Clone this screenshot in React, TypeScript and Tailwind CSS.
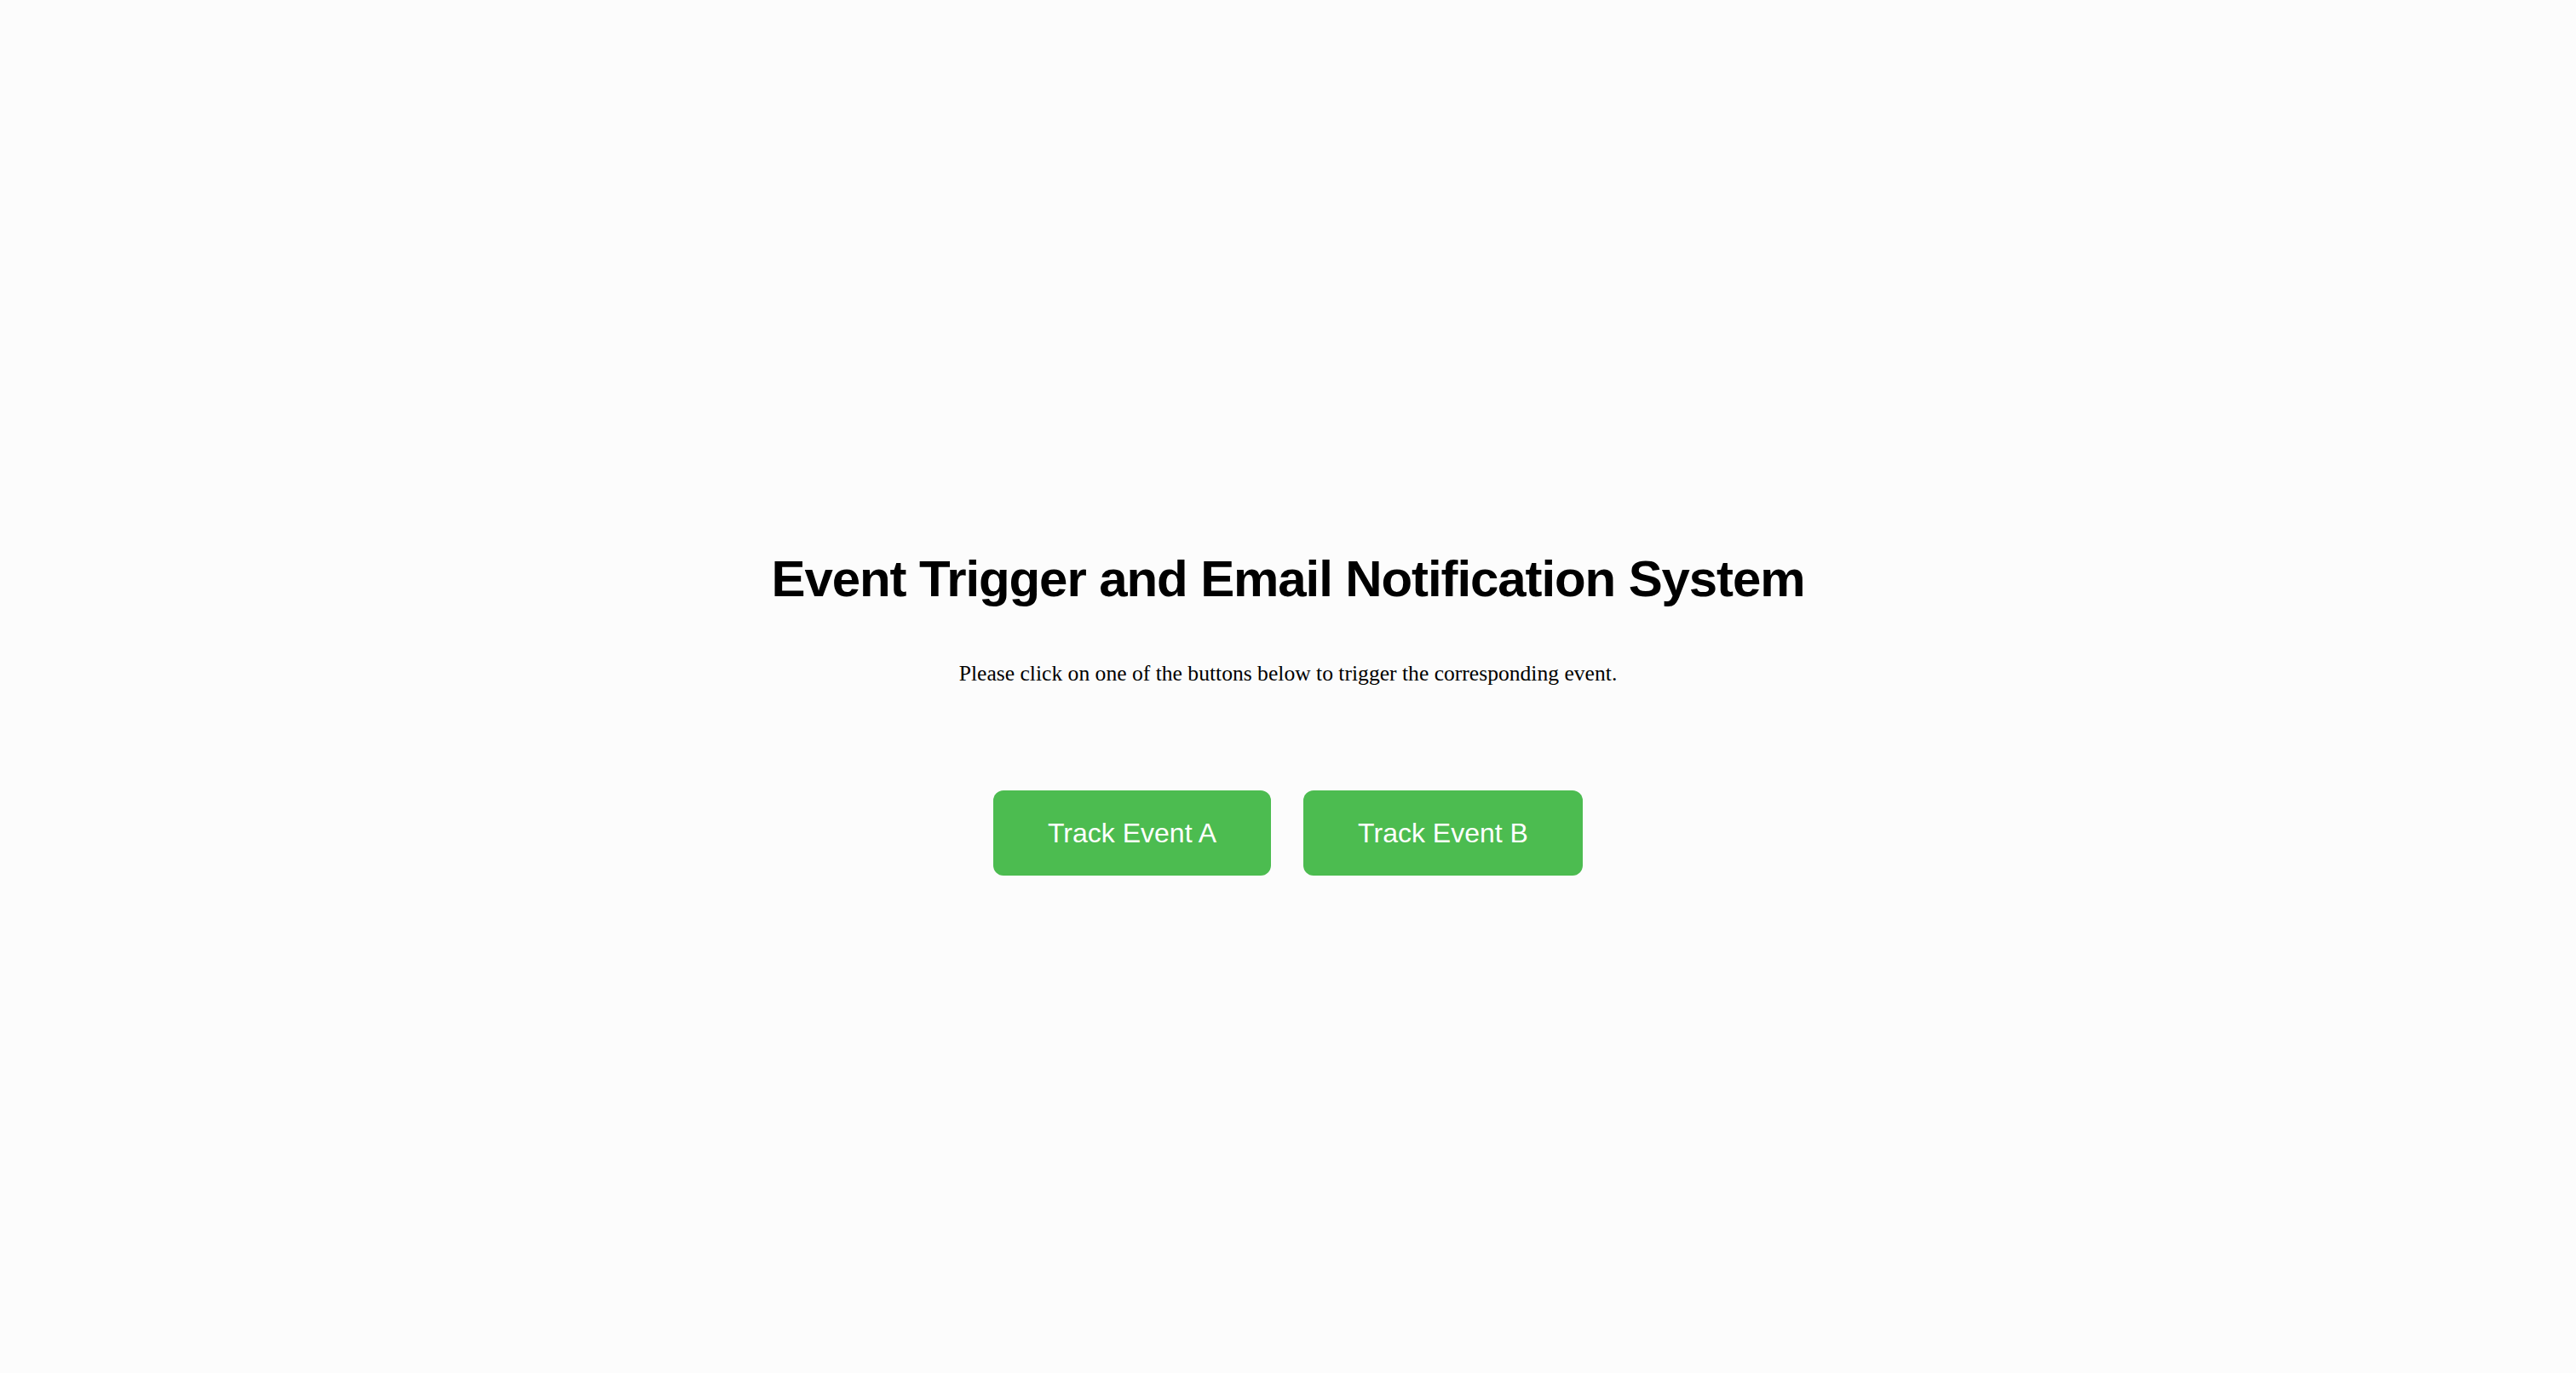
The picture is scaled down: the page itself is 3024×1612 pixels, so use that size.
export default function App() {
  return (
    <div className="min-h-screen w-full bg-[#fcfcfc] flex flex-col items-center pt-[645px]">
      {/* Heading */}
      <h1 className="text-[60px] leading-[69px] tracking-[-1.1px] font-bold text-black font-['Liberation_Sans',Arial,sans-serif]">
        Event Trigger and Email Notification System
      </h1>
      <p className="mt-[62px] text-[25.6px] leading-[30px] text-black font-['Liberation_Serif','Times_New_Roman',serif]">
        Please click on one of the buttons below to trigger the corresponding event.
      </p>

      {/* Buttons */}
      <div className="mt-[122px] flex gap-[38px]">
        <button className="w-[326px] h-[100px] rounded-[12px] bg-[#4cbc50] text-white text-[32px] font-['Liberation_Sans',Arial,sans-serif]">
          Track Event A
        </button>
        <button className="w-[328px] h-[100px] rounded-[12px] bg-[#4cbc50] text-white text-[32px] font-['Liberation_Sans',Arial,sans-serif]">
          Track Event B
        </button>
      </div>
    </div>
  );
}
